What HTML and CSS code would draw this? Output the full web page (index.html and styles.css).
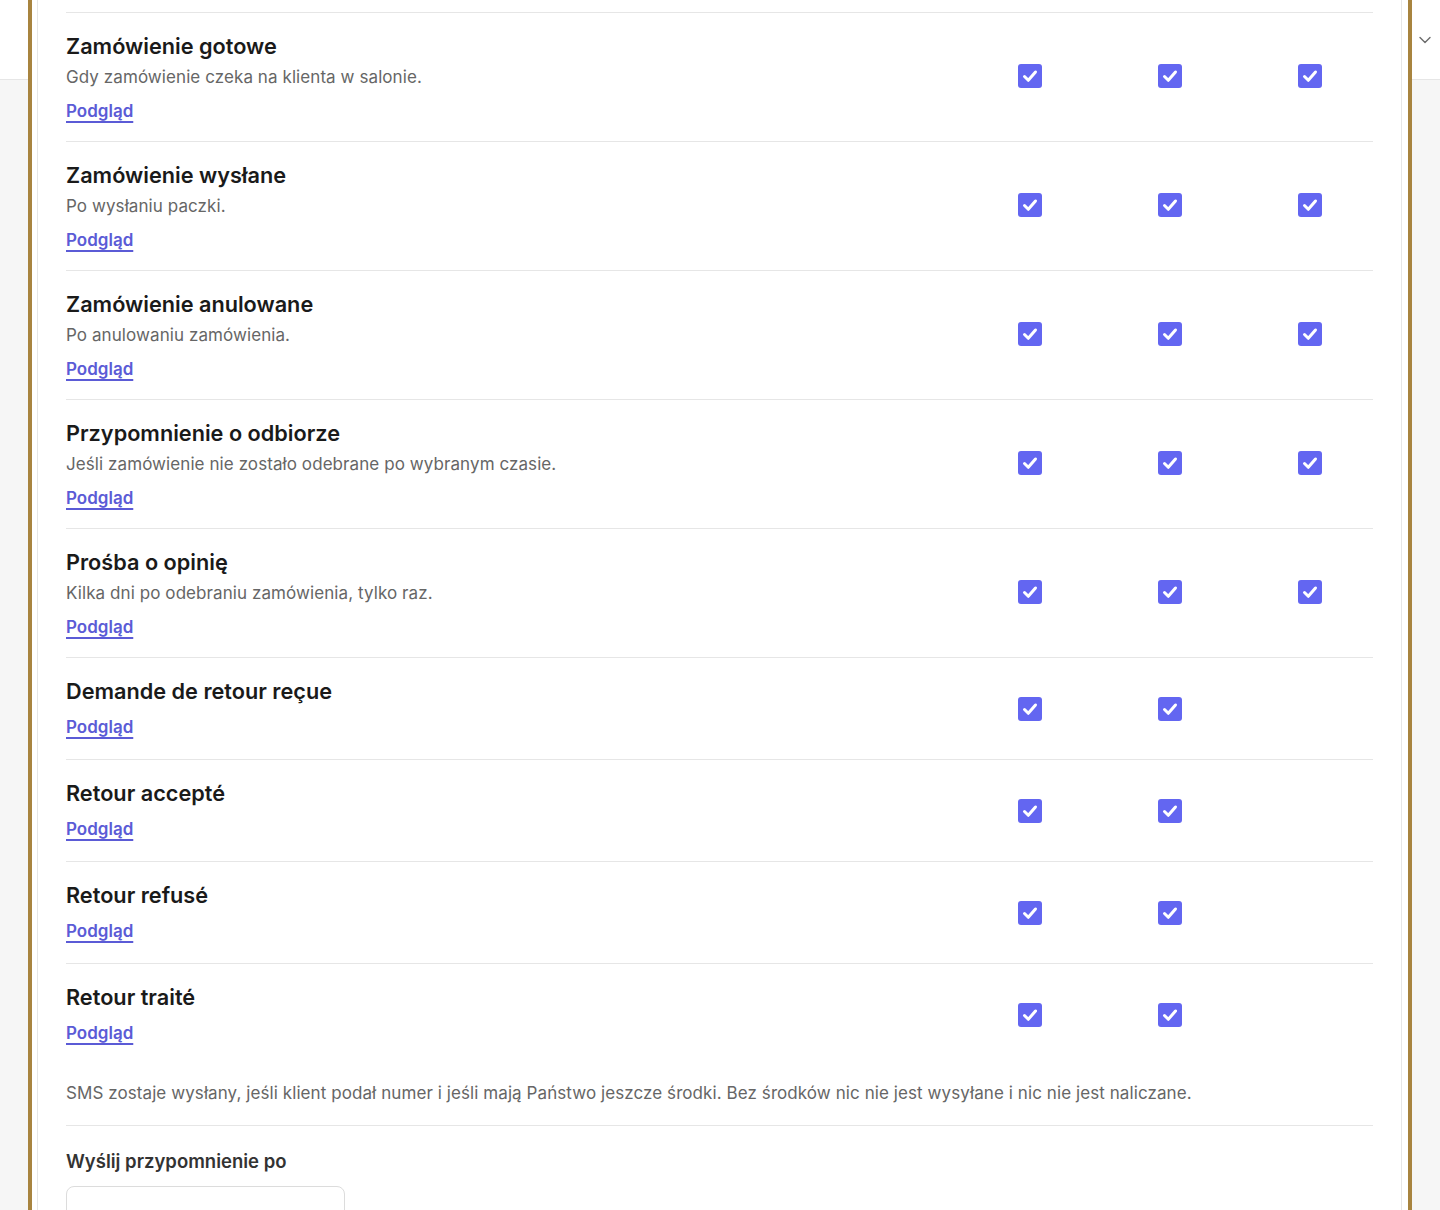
FILE: index.html
```html
<!doctype html>
<html lang="pl">
<head>
	<meta charset="UTF-8">
	<title>Powiadomienia klienta</title>

	<link rel="stylesheet" href="styles.css">

</head>
<body>

	<div class="topbar">
		<svg class="topbarToggle" width="12" height="8" viewBox="0 0 12 8"><path d="M1 1.5l5 5 5-5" fill="none" stroke="#6b6b6b" stroke-width="1.4" stroke-linecap="round" stroke-linejoin="round"/></svg>
	</div>

	<!-- editor frame sits over the page chrome -->
	<div class="editorFrame">
		<div class="settingsCard">

			<div class="notifRow">
				<div class="notifInfo">
					<p class="notifTitle">Zamówienie gotowe</p>
					<p class="notifDesc">Gdy zamówienie czeka na klienta w salonie.</p>
					<a class="previewLink" href="#">Podgląd</a>
				</div>
				<div class="notifChecks">
					<span class="checkBox"><svg viewBox="0 0 24 24"><path d="M6.5 12.5l3.8 3.8 7.2-8.3"/></svg></span>
					<span class="checkBox"><svg viewBox="0 0 24 24"><path d="M6.5 12.5l3.8 3.8 7.2-8.3"/></svg></span>
					<span class="checkBox"><svg viewBox="0 0 24 24"><path d="M6.5 12.5l3.8 3.8 7.2-8.3"/></svg></span>
				</div>
			</div>

			<div class="notifRow">
				<div class="notifInfo">
					<p class="notifTitle">Zamówienie wysłane</p>
					<p class="notifDesc">Po wysłaniu paczki.</p>
					<a class="previewLink" href="#">Podgląd</a>
				</div>
				<div class="notifChecks">
					<span class="checkBox"><svg viewBox="0 0 24 24"><path d="M6.5 12.5l3.8 3.8 7.2-8.3"/></svg></span>
					<span class="checkBox"><svg viewBox="0 0 24 24"><path d="M6.5 12.5l3.8 3.8 7.2-8.3"/></svg></span>
					<span class="checkBox"><svg viewBox="0 0 24 24"><path d="M6.5 12.5l3.8 3.8 7.2-8.3"/></svg></span>
				</div>
			</div>

			<div class="notifRow">
				<div class="notifInfo">
					<p class="notifTitle">Zamówienie anulowane</p>
					<p class="notifDesc">Po anulowaniu zamówienia.</p>
					<a class="previewLink" href="#">Podgląd</a>
				</div>
				<div class="notifChecks">
					<span class="checkBox"><svg viewBox="0 0 24 24"><path d="M6.5 12.5l3.8 3.8 7.2-8.3"/></svg></span>
					<span class="checkBox"><svg viewBox="0 0 24 24"><path d="M6.5 12.5l3.8 3.8 7.2-8.3"/></svg></span>
					<span class="checkBox"><svg viewBox="0 0 24 24"><path d="M6.5 12.5l3.8 3.8 7.2-8.3"/></svg></span>
				</div>
			</div>

			<div class="notifRow">
				<div class="notifInfo">
					<p class="notifTitle">Przypomnienie o odbiorze</p>
					<p class="notifDesc">Jeśli zamówienie nie zostało odebrane po wybranym czasie.</p>
					<a class="previewLink" href="#">Podgląd</a>
				</div>
				<div class="notifChecks">
					<span class="checkBox"><svg viewBox="0 0 24 24"><path d="M6.5 12.5l3.8 3.8 7.2-8.3"/></svg></span>
					<span class="checkBox"><svg viewBox="0 0 24 24"><path d="M6.5 12.5l3.8 3.8 7.2-8.3"/></svg></span>
					<span class="checkBox"><svg viewBox="0 0 24 24"><path d="M6.5 12.5l3.8 3.8 7.2-8.3"/></svg></span>
				</div>
			</div>

			<div class="notifRow">
				<div class="notifInfo">
					<p class="notifTitle">Prośba o opinię</p>
					<p class="notifDesc">Kilka dni po odebraniu zamówienia, tylko raz.</p>
					<a class="previewLink" href="#">Podgląd</a>
				</div>
				<div class="notifChecks">
					<span class="checkBox"><svg viewBox="0 0 24 24"><path d="M6.5 12.5l3.8 3.8 7.2-8.3"/></svg></span>
					<span class="checkBox"><svg viewBox="0 0 24 24"><path d="M6.5 12.5l3.8 3.8 7.2-8.3"/></svg></span>
					<span class="checkBox"><svg viewBox="0 0 24 24"><path d="M6.5 12.5l3.8 3.8 7.2-8.3"/></svg></span>
				</div>
			</div>

			<!-- return notifications: no SMS column, no description -->
			<div class="notifRow compact">
				<div class="notifInfo">
					<p class="notifTitle">Demande de retour reçue</p>
					<a class="previewLink" href="#">Podgląd</a>
				</div>
				<div class="notifChecks">
					<span class="checkBox"><svg viewBox="0 0 24 24"><path d="M6.5 12.5l3.8 3.8 7.2-8.3"/></svg></span>
					<span class="checkBox"><svg viewBox="0 0 24 24"><path d="M6.5 12.5l3.8 3.8 7.2-8.3"/></svg></span>
					<span class="checkSlot"></span>
				</div>
			</div>

			<div class="notifRow compact">
				<div class="notifInfo">
					<p class="notifTitle">Retour accepté</p>
					<a class="previewLink" href="#">Podgląd</a>
				</div>
				<div class="notifChecks">
					<span class="checkBox"><svg viewBox="0 0 24 24"><path d="M6.5 12.5l3.8 3.8 7.2-8.3"/></svg></span>
					<span class="checkBox"><svg viewBox="0 0 24 24"><path d="M6.5 12.5l3.8 3.8 7.2-8.3"/></svg></span>
					<span class="checkSlot"></span>
				</div>
			</div>

			<div class="notifRow compact">
				<div class="notifInfo">
					<p class="notifTitle">Retour refusé</p>
					<a class="previewLink" href="#">Podgląd</a>
				</div>
				<div class="notifChecks">
					<span class="checkBox"><svg viewBox="0 0 24 24"><path d="M6.5 12.5l3.8 3.8 7.2-8.3"/></svg></span>
					<span class="checkBox"><svg viewBox="0 0 24 24"><path d="M6.5 12.5l3.8 3.8 7.2-8.3"/></svg></span>
					<span class="checkSlot"></span>
				</div>
			</div>

			<div class="notifRow compact">
				<div class="notifInfo">
					<p class="notifTitle">Retour traité</p>
					<a class="previewLink" href="#">Podgląd</a>
				</div>
				<div class="notifChecks">
					<span class="checkBox"><svg viewBox="0 0 24 24"><path d="M6.5 12.5l3.8 3.8 7.2-8.3"/></svg></span>
					<span class="checkBox"><svg viewBox="0 0 24 24"><path d="M6.5 12.5l3.8 3.8 7.2-8.3"/></svg></span>
					<span class="checkSlot"></span>
				</div>
			</div>

			<p class="smsNote">SMS zostaje wysłany, jeśli klient podał numer i jeśli mają Państwo jeszcze środki. Bez środków nic nie jest wysyłane i nic nie jest naliczane.</p>

			<div class="reminderField">
				<label class="fieldLabel" for="reminderDays">Wyślij przypomnienie po</label>
				<div class="fieldRow">
					<input class="textInput" type="text" id="reminderDays">
					<span class="fieldUnit">dni</span>
				</div>
			</div>

		</div>
	</div>

</body>
</html>
```

FILE: styles.css
```css
html, body {
	margin: 0px;
	padding: 0px;
}
body {
	background-color: #f6f6f6;
	font-family: Inter, "Noto Sans", sans-serif;
	color: #1a1a1a;
	height: 1210px;
	overflow: hidden;
}

.topbar {
	background-color: #ffffff;
	height: 79px;
	border-bottom: 1px solid #e6e6e6;
	display: flex;
	align-items: center;
	justify-content: flex-end;
	padding-right: 9px;
}
.topbarToggle {
	display: block;
}

/*	The frame is drawn on top of the page chrome, so it is the one
	positioned element here. Everything inside is plain flow.
*/
.editorFrame {
	position: absolute;
	top: 0px;
	left: 28px;
	right: 28px;
	bottom: 0px;
	border-left: 4px solid #a8843f;
	border-right: 4px solid #a8843f;
	background-color: #ffffff;
	padding: 0 6px 0 5px;
}
.settingsCard {
	height: 100%;
	box-sizing: border-box;
	background-color: #ffffff;
	border-left: 1px solid #e6e6e6;
	border-right: 1px solid #e6e6e6;
	padding: 12px 28px 0 28px;
}

.notifRow {
	display: flex;
	border-top: 1px solid #e6e6e6;
	padding: 19px 0 18px 0;
}
.notifRow.compact {
	padding-bottom: 20px;
}
.notifInfo {
	flex: 1;
	display: flex;
	flex-direction: column;
	align-items: flex-start;
}
.notifTitle {
	margin: 0;
	font-size: 21.7px;
	line-height: 28px;
	font-weight: 600;
	color: #1a1a1a;
}
.notifDesc {
	margin: 5px 0 0 0;
	font-size: 17px;
	line-height: 24px;
	letter-spacing: 0.08px;
	color: #666666;
}
.previewLink {
	margin-top: 10px;
	font-size: 17px;
	line-height: 24px;
	font-weight: 600;
	color: #5b5bd6;
	text-decoration: underline;
	text-decoration-thickness: 1.5px;
	text-underline-offset: 4px;
}

/*	checks are centred on the whole row, padding included,
	so they pull back over the row's top and bottom padding
*/
.notifChecks {
	display: flex;
	align-items: center;
	gap: 116px;
	margin: -21px 51px -18px 0;
}
.notifRow.compact .notifChecks {
	margin-bottom: -23px;
}
.checkBox, .checkSlot {
	width: 24px;
	height: 24px;
}
.checkBox {
	background-color: #6366f1;
	border-radius: 3px;
}
.checkBox svg {
	display: block;
	width: 24px;
	height: 24px;
}
.checkBox path {
	fill: none;
	stroke: #ffffff;
	stroke-width: 3;
	stroke-linecap: round;
	stroke-linejoin: round;
}

.smsNote {
	margin: 16px 0 0 0;
	padding-bottom: 20px;
	font-size: 17px;
	line-height: 24px;
	letter-spacing: 0.08px;
	color: #666666;
	border-bottom: 1px solid #e6e6e6;
}

.reminderField {
	padding-top: 23px;
}
.fieldLabel {
	display: block;
	font-size: 18.5px;
	line-height: 24px;
	font-weight: 600;
	color: #333333;
}
.fieldRow {
	display: flex;
	align-items: flex-start;
	gap: 38px;
	margin-top: 13px;
}
.textInput {
	width: 279px;
	height: 54px;
	box-sizing: border-box;
	border: 1px solid #dcdcdc;
	border-radius: 8px;
	font-family: inherit;
	font-size: 17px;
	padding: 0 14px;
}
.fieldUnit {
	margin-top: 20px;
	font-size: 17px;
	line-height: 24px;
	color: #333333;
}
```
